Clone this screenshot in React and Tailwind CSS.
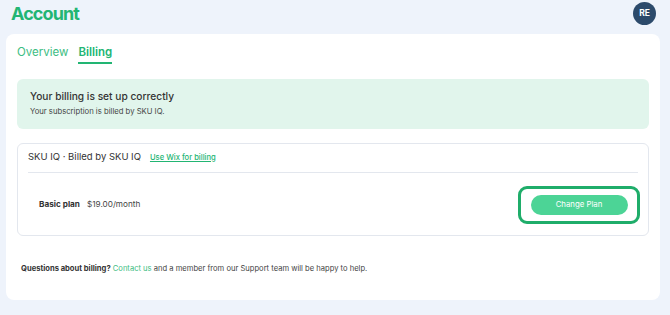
import React from "react";

const font = { fontFamily: "Inter, 'Noto Sans', sans-serif" };

const App = () => {
    return (
        <div className="w-[670px] h-[315px] bg-[#eef3fb] overflow-hidden" style={font}>
            <header className="flex items-center justify-between h-[27px] pl-[11px] pr-[14px]">
                <h1 className="text-[18px] font-bold tracking-[-0.9px] text-[#22b573] leading-none">Account</h1>
                <div className="w-[23px] h-[23px] rounded-full bg-[#2c4a6b] text-white text-[8.5px] font-bold flex items-center justify-center">
                    RE
                </div>
            </header>

            <main className="mx-[6px] mt-[7px] w-[654px] h-[266px] bg-white rounded-[8px] px-[11px] pt-[13px]">
                <nav className="flex gap-[10px] text-[11.5px] leading-none">
                    <span className="text-[#3dbd83] pb-[5px]">Overview</span>
                    <span className="text-[#22b573] font-semibold border-b-2 border-[#22b573] pb-[3px]">Billing</span>
                </nav>

                <div className="mt-[15px] h-[50px] bg-[#e1f5ec] rounded-[6px] px-[13px] flex flex-col justify-center">
                    <p className="text-[10.2px] font-medium text-[#333] leading-tight">Your billing is set up correctly</p>
                    <p className="text-[7.7px] text-[#444] mt-[3px]">Your subscription is billed by SKU IQ.</p>
                </div>

                <section className="mt-[14px] h-[93px] border border-[#e3e7ee] rounded-[6px] px-[10px]">
                    <div className="flex items-center gap-[9px] h-[29px] border-b border-[#e3e7ee]">
                        <span className="text-[9.5px] text-[#333]">SKU IQ · Billed by SKU IQ</span>
                        <a className="text-[7.6px] text-[#22b573] underline font-medium">Use Wix for billing</a>
                    </div>
                    <div className="flex items-center justify-between h-[62px] pt-[2px] pl-[11px]">
                        <div className="flex items-center gap-[7px] text-[8.2px]">
                            <span className="font-bold text-[#333]">Basic plan</span>
                            <span className="text-[#444]">$19.00/month</span>
                        </div>
                        <div className="border-[3px] border-[#1fad6a] rounded-[9px] w-[122px] h-[38px] flex items-center justify-center -mr-[2px]">
                            <button className="w-[97px] h-[20px] rounded-full bg-[#4cd496] text-white text-[7.8px]">
                                Change Plan
                            </button>
                        </div>
                    </div>
                </section>

                <p className="mt-[27px] pl-[4px] text-[7.6px] text-[#444]">
                    <span className="font-bold text-[#333]">Questions about billing?</span>{" "}
                    <span className="text-[#3dbd83]">Contact us</span> and a member from our Support team will be happy to help.
                </p>
            </main>
        </div>
    );
};

export default App;
